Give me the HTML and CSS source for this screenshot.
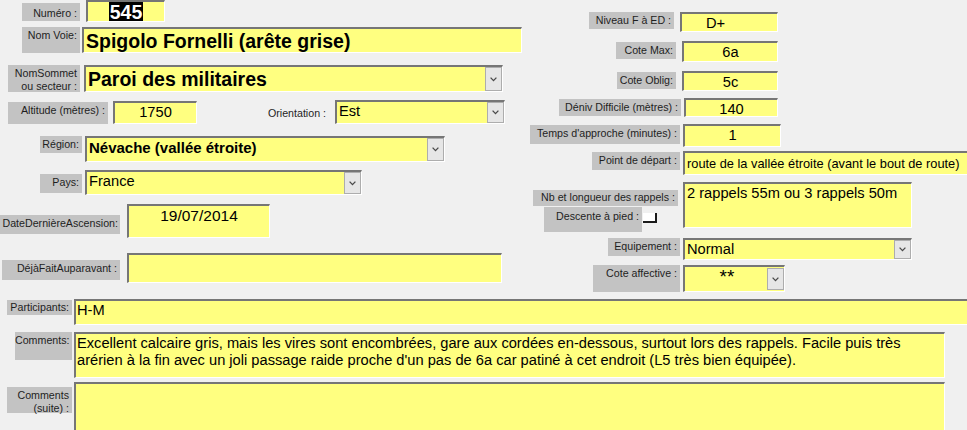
FILE: index.html
```html
<!DOCTYPE html>
<html lang="fr">
<head>
<meta charset="utf-8">
<title>Fiche voie</title>
<link rel="stylesheet" href="styles.css">
</head>
<body>
<div class="form">
  <div class="top">
    <div class="col-left">
      <div class="row r-numero">
        <div class="lbl l-numero">Numéro :</div>
        <div class="fld center f-numero"><span class="txt"><span class="sel">545</span></span></div>
      </div>
      <div class="row r-voie">
        <div class="lbl l-voie">Nom Voie:</div>
        <div class="fld big f-voie"><span class="txt">Spigolo Fornelli (arête grise)</span></div>
      </div>
      <div class="row r-sommet">
        <div class="lbl l-sommet">NomSommet<br>ou secteur :</div>
        <div class="fld big f-sommet"><span class="txt">Paroi des militaires</span><span class="dd"><svg width="7" height="5" viewBox="0 0 7 5"><path d="M0.6 0.6 L3.5 3.6 L6.4 0.6" fill="none" stroke="#4a4a4a" stroke-width="1.3"/></svg></span></div>
      </div>
      <div class="row r-alt">
        <div class="lbl l-alt">Altitude (mètres) :</div>
        <div class="fld center f-alt"><span class="txt">1750</span></div>
        <div class="lbl plain l-orient">Orientation :</div>
        <div class="fld f-orient"><span class="txt">Est</span><span class="dd"><svg width="7" height="5" viewBox="0 0 7 5"><path d="M0.6 0.6 L3.5 3.6 L6.4 0.6" fill="none" stroke="#4a4a4a" stroke-width="1.3"/></svg></span></div>
      </div>
      <div class="row r-region">
        <div class="lbl l-region">Région:</div>
        <div class="fld f-region"><span class="txt">Névache (vallée étroite)</span><span class="dd"><svg width="7" height="5" viewBox="0 0 7 5"><path d="M0.6 0.6 L3.5 3.6 L6.4 0.6" fill="none" stroke="#4a4a4a" stroke-width="1.3"/></svg></span></div>
      </div>
      <div class="row r-pays">
        <div class="lbl l-pays">Pays:</div>
        <div class="fld f-pays"><span class="txt">France</span><span class="dd"><svg width="7" height="5" viewBox="0 0 7 5"><path d="M0.6 0.6 L3.5 3.6 L6.4 0.6" fill="none" stroke="#4a4a4a" stroke-width="1.3"/></svg></span></div>
      </div>
      <div class="row r-date">
        <div class="lbl l-date">DateDernièreAscension:</div>
        <div class="fld center f-date"><span class="txt">19/07/2014</span></div>
      </div>
      <div class="row r-deja">
        <div class="lbl l-deja">DéjàFaitAuparavant :</div>
        <div class="fld f-deja"><span class="txt"></span></div>
      </div>
    </div>
    <div class="col-right">
      <div class="row r-niveau">
        <div class="lbl l-niveau">Niveau F à ED :</div>
        <div class="fld center f-niveau"><span class="txt">D+</span></div>
      </div>
      <div class="row r-cotemax">
        <div class="lbl l-cotemax">Cote Max:</div>
        <div class="fld center f-cotemax"><span class="txt">6a</span></div>
      </div>
      <div class="row r-coteoblig">
        <div class="lbl l-coteoblig">Cote Oblig:</div>
        <div class="fld center f-coteoblig"><span class="txt">5c</span></div>
      </div>
      <div class="row r-deniv">
        <div class="lbl l-deniv">Déniv Difficile (mètres) :</div>
        <div class="fld center f-deniv"><span class="txt">140</span></div>
      </div>
      <div class="row r-temps">
        <div class="lbl l-temps">Temps d'approche (minutes) :</div>
        <div class="fld center f-temps"><span class="txt">1</span></div>
      </div>
      <div class="row r-point">
        <div class="lbl l-point">Point de départ :</div>
        <div class="fld f-point"><span class="txt">route de la vallée étroite (avant le bout de route)</span></div>
      </div>
      <div class="row r-rappels">
        <div class="rap-labels">
          <div class="lbl l-nb">Nb et longueur des rappels :</div>
          <div class="desc-row">
            <div class="lbl l-desc">Descente à pied :</div>
            <div class="chk"></div>
          </div>
        </div>
        <div class="fld multi f-rappels"><span class="txt">2 rappels 55m ou 3 rappels 50m</span></div>
      </div>
      <div class="row r-equip">
        <div class="lbl l-equip">Equipement :</div>
        <div class="fld f-equip"><span class="txt">Normal</span><span class="dd"><svg width="7" height="5" viewBox="0 0 7 5"><path d="M0.6 0.6 L3.5 3.6 L6.4 0.6" fill="none" stroke="#4a4a4a" stroke-width="1.3"/></svg></span></div>
      </div>
      <div class="row r-coteaff">
        <div class="lbl l-coteaff">Cote affective :</div>
        <div class="fld center f-coteaff"><span class="txt">**</span><span class="dd dd-short"><svg width="7" height="5" viewBox="0 0 7 5"><path d="M0.6 0.6 L3.5 3.6 L6.4 0.6" fill="none" stroke="#4a4a4a" stroke-width="1.3"/></svg></span></div>
      </div>
    </div>
  </div>
  <div class="bottom">
    <div class="row r-part">
      <div class="lbl l-part">Participants:</div>
      <div class="fld f-part"><span class="txt">H-M</span></div>
    </div>
    <div class="row r-comm">
      <div class="lbl l-comm">Comments:</div>
      <div class="fld multi f-comm"><span class="txt">Excellent calcaire gris, mais les vires sont encombrées, gare aux cordées en-dessous, surtout lors des rappels. Facile puis très arérien à la fin avec un joli passage raide proche d'un pas de 6a car patiné à cet endroit (L5 très bien équipée).</span></div>
    </div>
    <div class="row r-suite">
      <div class="lbl l-suite">Comments<br>(suite) :</div>
      <div class="fld multi f-suite"><span class="txt"></span></div>
    </div>
  </div>
</div>
</body>
</html>
```

FILE: styles.css
```css
* { box-sizing: border-box; }
html, body { margin: 0; padding: 0; }
body {
  background: #f0f0f0;
  width: 967px;
  height: 430px;
  overflow: hidden;
  font-family: "Liberation Sans", Arial, sans-serif;
}
.form { display: flex; flex-direction: column; width: 967px; }
.top { display: flex; height: 292px; flex: none; }
.col-left { width: 530px; flex: none; display: flex; flex-direction: column; }
.col-right { width: 437px; flex: none; display: flex; flex-direction: column; }
.bottom { display: flex; flex-direction: column; margin-top: 7px; }

.row { display: flex; align-items: flex-start; flex: none; }

/* labels */
.lbl {
  flex: none;
  background: #c3c3c3;
  color: #1e1e1e;
  font-size: 10.67px;
  line-height: 13px;
  padding: 2px 3px 0 0;
  text-align: right;
  white-space: nowrap;
}
.lbl.plain { background: transparent; }

/* fields */
.fld {
  flex: none;
  display: flex;
  align-items: flex-start;
  background: #ffff80;
  border-style: solid;
  border-width: 2px 1px 1px 2px;
  border-color: #767676 #ffffff #ffffff #767676;
  color: #000;
  font-size: 14.67px;
  line-height: 17px;
  padding: 1px 2px 0 2px;
  overflow: hidden;
}
.fld .txt { flex: 1; min-width: 0; white-space: nowrap; }
.fld.center .txt { text-align: center; }
.fld.multi .txt { white-space: normal; }
.fld.big { font-size: 19.5px; font-weight: bold; line-height: 22px; }

.dd {
  flex: none;
  width: 17px;
  align-self: stretch;
  margin: -1px -2px 0 0;
  background: #e6e6e6;
  border: 1px solid #adadad;
  display: flex;
  align-items: center;
  justify-content: center;
}
.dd svg { display: block; }
.dd-short { margin-top: 0; margin-bottom: 1px; }

/* left column */
.r-numero { height: 24px; }
.l-numero { margin: 3px 0 0 22px; width: 58px; height: 18px; padding-top: 4px; }
.f-numero { margin-left: 6px; width: 79px; height: 22px; padding: 0; }
.sel {
  display: inline-block;
  background: #000;
  color: #fff;
  font-weight: bold;
  font-size: 19.5px;
  line-height: 20px;
  padding: 0 1px;
}

.r-voie { margin-top: 3px; height: 26px; }
.l-voie { margin-left: 22px; width: 58px; height: 26px; }
.f-voie { margin-left: 2px; width: 440px; height: 26px; }

.r-sommet { margin-top: 12px; height: 27px; }
.l-sommet { margin-left: 8px; width: 72px; height: 27px; }
.f-sommet { margin-left: 4px; width: 419px; height: 27px; }

.r-alt { margin-top: 8px; height: 24px; }
.l-alt { margin: 2px 0 0 8px; width: 100px; height: 22px; }
.f-alt { margin: 1px 0 0 5px; width: 84px; height: 23px; }
.l-orient { margin-top: 5px; width: 132px; }
.f-orient { margin-left: 6px; width: 170px; height: 24px; }

.r-region { margin-top: 12px; height: 26px; }
.l-region { margin-left: 40px; width: 42px; height: 17px; }
.f-region { margin-left: 3px; width: 360px; height: 26px; font-size: 15px; font-weight: bold; }

.r-pays { margin-top: 8px; height: 25px; }
.l-pays { margin: 4px 0 0 40px; width: 42px; height: 19px; }
.f-pays { margin-left: 3px; width: 277px; height: 25px; }

.r-date { margin-top: 9px; height: 34px; }
.l-date { margin-top: 11px; width: 120px; height: 19px; padding-right: 2px; }
.f-date { margin-left: 7px; width: 143px; height: 34px; font-size: 15.5px; }

.r-deja { margin-top: 15px; height: 30px; }
.l-deja { margin: 7px 0 0 2px; width: 118px; height: 20px; }
.f-deja { margin-left: 7px; width: 375px; height: 30px; }

/* right column */
.r-niveau { margin-top: 12px; height: 20px; }
.l-niveau { margin-left: 59px; width: 85px; height: 17px; }
.f-niveau { margin-left: 6px; width: 98px; height: 20px; padding-right: 30px; }

.r-cotemax { margin-top: 9px; height: 21px; }
.l-cotemax { margin: 1px 0 0 86px; width: 60px; height: 17px; }
.f-cotemax { margin-left: 6px; width: 96px; height: 21px; }

.r-coteoblig { margin-top: 9px; height: 20px; }
.l-coteoblig { margin: 1px 0 0 87px; width: 59px; height: 17px; }
.f-coteoblig { margin-left: 6px; width: 96px; height: 20px; }

.r-deniv { margin-top: 7px; height: 19px; }
.l-deniv { margin: 1px 0 0 29px; width: 122px; height: 17px; }
.f-deniv { margin-left: 3px; width: 94px; height: 19px; }

.r-temps { margin-top: 7px; height: 23px; }
.l-temps { margin-top: 1px; width: 150px; height: 19px; }
.f-temps { margin-left: 3px; width: 98px; height: 23px; }

.r-point { margin-top: 4px; height: 24px; }
.l-point { margin: 1px 0 0 62px; width: 88px; height: 18px; }
.f-point { margin-left: 3px; width: 290px; height: 24px; font-size: 12.8px; padding-top: 2px; }

.r-rappels { margin-top: 7px; height: 50px; }
.rap-labels { width: 150px; flex: none; display: flex; flex-direction: column; align-items: flex-start; }
.l-nb { margin: 8px 0 0 3px; width: 145px; height: 16px; padding-top: 1px; }
.desc-row { display: flex; align-items: flex-start; margin-top: 1px; }
.l-desc { margin-left: 14px; width: 98px; height: 25px; padding-top: 3px; }
.chk {
  flex: none;
  margin: 6px 0 0 1px;
  width: 14px;
  height: 10px;
  background: #fff;
  border-right: 2px solid #1a1a1a;
  border-bottom: 2px solid #1a1a1a;
}
.f-rappels { margin-left: 3px; width: 229px; height: 46px; }

.r-equip { margin-top: 6px; height: 22px; }
.l-equip { margin-left: 78px; width: 72px; height: 18px; }
.f-equip { margin-left: 3px; width: 229px; height: 22px; }

.r-coteaff { margin-top: 5px; height: 27px; }
.l-coteaff { margin-left: 63px; width: 87px; height: 27px; }
.f-coteaff { margin-left: 3px; width: 102px; height: 27px; font-size: 19px; }

/* bottom */
.r-part { height: 26px; }
.l-part { margin: 1px 0 0 7px; width: 65px; height: 15px; padding-top: 1px; }
.f-part { margin-left: 2px; width: 900px; height: 26px; padding-left: 1px; }

.r-comm { margin-top: 7px; height: 46px; }
.l-comm { margin-left: 15px; width: 57px; height: 28px; }
.f-comm { margin-left: 2px; width: 871px; height: 46px; padding-left: 1px; }

.r-suite { margin-top: 4px; height: 50px; }
.l-suite { margin: 5px 0 0 7px; width: 65px; height: 26px; }
.f-suite { margin-left: 2px; width: 871px; height: 50px; }
```
